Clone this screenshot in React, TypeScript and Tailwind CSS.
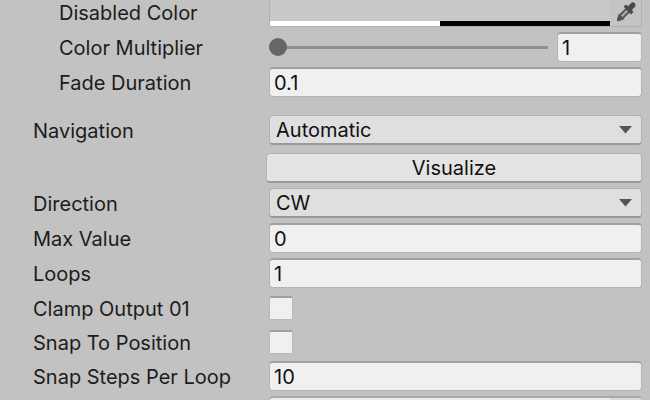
import { useState } from 'react';
import type { ReactNode } from 'react';

const inputStyle =
  'h-[30px] w-full min-w-0 rounded-[4px] border border-[#b4b4b4] border-t-2 border-t-[#a0a0a0] bg-[#f0f0f0] px-1 text-[#111] outline-none';

interface RowProps {
  id: string;
  label: string;
  nested?: boolean;
  className?: string;
  children: ReactNode;
}

function Row({ id, label, nested, className = '', children }: RowProps) {
  return (
    <div className={`grid shrink-0 grid-cols-[269px_1fr] items-center ${className}`}>
      <label htmlFor={id} className={`pt-0.5 whitespace-nowrap ${nested ? 'pl-[59px]' : 'pl-[33px]'}`}>
        {label}
      </label>
      {children}
    </div>
  );
}

function TextRow({ id, label, value, nested }: { id: string; label: string; value: string; nested?: boolean }) {
  return (
    <Row id={id} label={label} nested={nested}>
      <input id={id} type="text" defaultValue={value} className={inputStyle} />
    </Row>
  );
}

function SelectRow({ id, label, options, className }: { id: string; label: string; options: string[]; className?: string }) {
  return (
    <Row id={id} label={label} className={className}>
      <div className="relative">
        <select
          id={id}
          className="block h-[30px] w-full appearance-none rounded-[4px] border border-[#b2b2b2] border-b-2 border-b-[#999] bg-[#dfdfdf] px-1.5 text-[#111] outline-none"
        >
          {options.map((o) => (
            <option key={o}>{o}</option>
          ))}
        </select>
        <svg className="pointer-events-none absolute top-[11px] right-2.5" width="13" height="8" viewBox="0 0 13 8">
          <path d="M0 0H13L6.5 7.5Z" fill="#555" />
        </svg>
      </div>
    </Row>
  );
}

function CheckRow({ id, label }: { id: string; label: string }) {
  return (
    <Row id={id} label={label} className="h-[29px]">
      <input
        id={id}
        type="checkbox"
        className="size-6 appearance-none rounded-[2px] border border-[#b8b8b8] border-t-2 border-t-[#a0a0a0] bg-[#f0f0f0] checked:bg-[#555]"
      />
    </Row>
  );
}

function Eyedropper() {
  return (
    <svg width="20" height="20" viewBox="0 0 20 20">
      <path d="M10.5 6.5L13.5 9.5L6.5 16.5L3 17.5L2.5 17L3.5 13.5Z" fill="#a8a8a8" stroke="#555" strokeWidth="1.8" />
      <path d="M1 17L3 11.5L8.5 17L3 19.3L1 19Z" fill="#555" />
      <path d="M7.5 4.5L10 2.5L12 4.2L15 1C17.5-1 21 2 18.8 5L15.8 8L17.5 10L15 12.5Z" fill="#4c4c4c" />
    </svg>
  );
}

export default function App() {
  const [multiplier, setMultiplier] = useState('1');

  return (
    <div className="flex h-screen flex-col gap-[5px] overflow-hidden bg-[#c2c2c2] pr-2 font-['Inter',sans-serif] text-[20px] leading-7 text-[#1c1c1c]">
      <Row id="disabled-color" label="Disabled Color" nested className="-mt-[3px] h-[30px]">
        <div className="flex h-[30px] border border-[#b2b2b2]">
          <button id="disabled-color" type="button" className="flex flex-1 flex-col justify-end bg-[#c8c8c8]">
            <span className="flex h-[5px] w-full">
              <span className="flex-1 bg-white" />
              <span className="flex-1 bg-black" />
            </span>
          </button>
          <button type="button" aria-label="Pick color" className="flex w-[31px] items-center justify-center bg-[#c4c4c4]">
            <Eyedropper />
          </button>
        </div>
      </Row>

      <Row id="multiplier" label="Color Multiplier" nested>
        <div className="flex items-center gap-[9px]">
          <input
            id="multiplier"
            type="range"
            min="1"
            max="5"
            step="0.1"
            value={multiplier}
            onChange={(e) => setMultiplier(e.target.value)}
            className="h-[18px] min-w-0 flex-1 appearance-none bg-transparent [&::-webkit-slider-runnable-track]:h-[3px] [&::-webkit-slider-runnable-track]:bg-[#8f8f8f] [&::-webkit-slider-thumb]:-mt-2 [&::-webkit-slider-thumb]:size-[18px] [&::-webkit-slider-thumb]:appearance-none [&::-webkit-slider-thumb]:rounded-full [&::-webkit-slider-thumb]:bg-[#666]"
          />
          <div className="w-[85px]">
            <input
              type="text"
              aria-label="Color Multiplier value"
              value={multiplier}
              onChange={(e) => setMultiplier(e.target.value)}
              className={inputStyle}
            />
          </div>
        </div>
      </Row>

      <TextRow id="fade" label="Fade Duration" value="0.1" nested />

      <SelectRow
        id="navigation"
        label="Navigation"
        options={['Automatic', 'None', 'Horizontal', 'Vertical', 'Explicit']}
        className="mt-[13px]"
      />
      <div className="mt-[3px] shrink-0 pl-[266px]">
        <button
          type="button"
          className="block h-[30px] w-full rounded-[4px] border border-[#b2b2b2] border-b-2 border-b-[#999] bg-[#e4e4e4] leading-[26px] text-[#111]"
        >
          Visualize
        </button>
      </div>

      <SelectRow id="direction" label="Direction" options={['CW', 'CCW']} />
      <TextRow id="max-value" label="Max Value" value="0" />
      <TextRow id="loops" label="Loops" value="1" />
      <CheckRow id="clamp" label="Clamp Output 01" />
      <CheckRow id="snap" label="Snap To Position" />
      <TextRow id="snap-steps" label="Snap Steps Per Loop" value="10" />

      <div className="shrink-0 pl-[269px]">
        <div className="flex h-[30px] overflow-hidden rounded-[4px] border border-[#b4b4b4] border-t-2 border-t-[#a8a8a8] bg-[#ececec]">
          <input type="text" aria-label="Object" className="min-w-0 flex-1 outline-none" />
          <button type="button" aria-label="Select object" className="w-[31px] bg-[#dadada]" />
        </div>
      </div>
    </div>
  );
}
